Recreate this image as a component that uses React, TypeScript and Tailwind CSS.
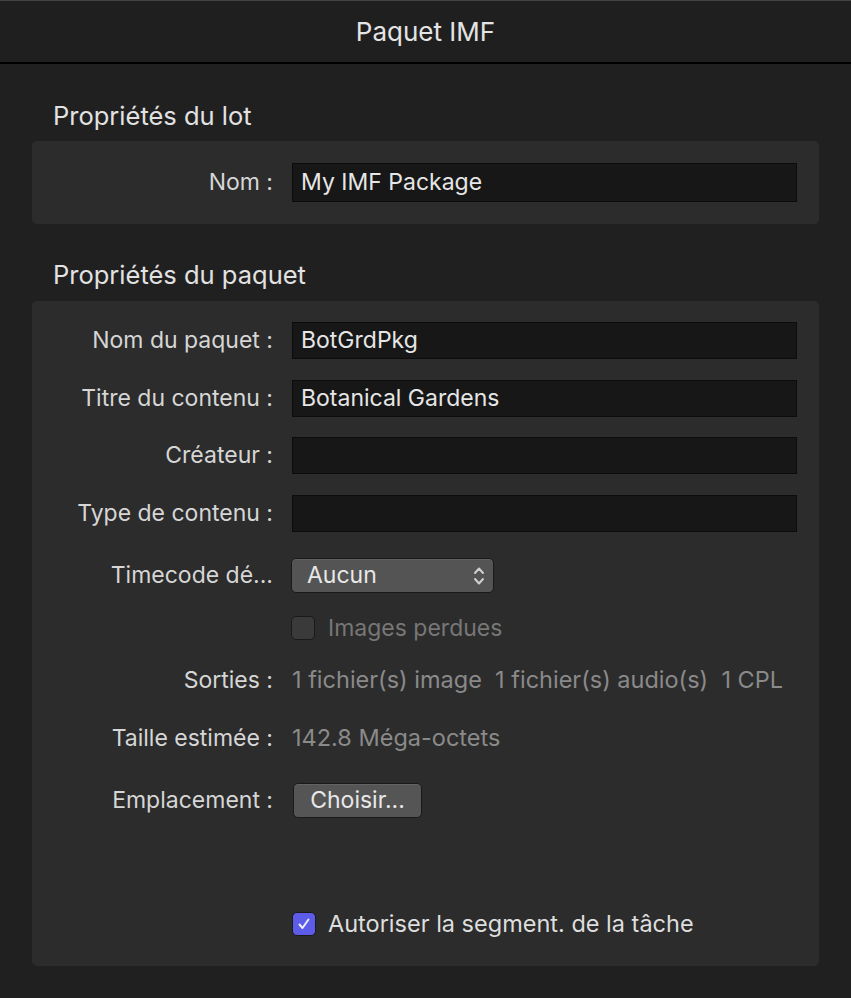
import React, { useState } from 'react';

const font = { fontFamily: 'Inter, "Noto Sans", sans-serif' };

const Label: React.FC<{ children: React.ReactNode }> = ({ children }) => (
  <div className="w-[242px] shrink-0 text-right text-[23px] text-[#d6d6d6] pr-[1px]">{children}</div>
);

const TextRow: React.FC<{ label: string; value: string; className?: string }> = ({ label, value, className }) => (
  <div className={`flex items-center h-[37px] ${className || ''}`}>
    <Label>{label}</Label>
    <div className="ml-[18px] flex-1 h-full bg-[#171717] border border-[#0c0c0c] flex items-center px-[8px] text-[23px] text-[#e6e6e6]">
      {value}
    </div>
  </div>
);

const ChevronUpDown = () => (
  <svg width="12" height="22" viewBox="0 0 12 22" fill="none" stroke="#cfcfcf" strokeWidth="2" strokeLinecap="round" strokeLinejoin="round">
    <path d="M2 8 L6 3.5 L10 8" />
    <path d="M2 14 L6 18.5 L10 14" />
  </svg>
);

export default function App() {
  const [split, setSplit] = useState(true);

  return (
    <div className="w-[851px] h-[998px] bg-[#202020] overflow-hidden" style={font}>
      {/* title bar */}
      <div className="h-[64px] bg-[#1f1f1f] border-t border-t-[#444] border-b-2 border-b-black flex items-center justify-center">
        <span className="text-[26px] text-[#e4e4e4]">Paquet IMF</span>
      </div>

      <div className="px-[32px] pt-[32px]">
        <div className="h-[40px] flex items-center pl-[21px] text-[25.5px] text-[#e2e2e2]">Propriétés du lot</div>
        <div className="mt-[5px] bg-[#2c2c2c] rounded-[5px] pt-[22px] pb-[22px] pr-[22px]">
          <div className="flex items-center h-[39px]">
            <Label>Nom :</Label>
            <div className="ml-[18px] flex-1 h-full bg-[#171717] border border-[#0c0c0c] flex items-center px-[8px] text-[23px] text-[#e6e6e6]">
              My IMF Package
            </div>
          </div>
        </div>

        <div className="mt-[31px] h-[40px] flex items-center pl-[21px] text-[25.5px] text-[#e2e2e2]">Propriétés du paquet</div>
        <div className="mt-[6px] bg-[#2c2c2c] rounded-[5px] pt-[21px] pb-[30px] pr-[22px]">
          <TextRow label="Nom du paquet :" value="BotGrdPkg" />
          <TextRow label="Titre du contenu :" value="Botanical Gardens" className="mt-[20.5px]" />
          <TextRow label="Créateur :" value="" className="mt-[20.5px]" />
          <TextRow label="Type de contenu :" value="" className="mt-[20.5px]" />

          <div className="flex items-center h-[35px] mt-[26.5px]">
            <Label>Timecode dé...</Label>
            <div className="ml-[17px] w-[203px] h-full rounded-[5px] bg-[#545454] border border-[#1a1a1a] shadow-[inset_0_1px_0_rgba(255,255,255,0.08)] flex items-center justify-between pl-[15px] pr-[8px] text-[23px] text-[#e8e8e8]">
              <span>Aucun</span>
              <ChevronUpDown />
            </div>
          </div>

          <div className="flex items-center h-[24px] mt-[23px]">
            <div className="w-[242px] shrink-0" />
            <div className="ml-[17px] w-[24px] h-[24px] rounded-[5px] bg-[#3a3a3a] border border-[#1a1a1a]" />
            <span className="ml-[13px] text-[23px] text-[#777]">Images perdues</span>
          </div>

          <div className="flex items-center h-[30px] mt-[25px]">
            <Label>Sorties :</Label>
            <span className="ml-[18px] text-[23.5px] text-[#8a8a8a] whitespace-pre">1 fichier(s) image  1 fichier(s) audio(s)  1 CPL</span>
          </div>

          <div className="flex items-center h-[30px] mt-[28px]">
            <Label>Taille estimée :</Label>
            <span className="ml-[18px] text-[23.5px] text-[#8a8a8a]">142.8 Méga-octets</span>
          </div>

          <div className="flex items-center h-[35px] mt-[30px]">
            <Label>Emplacement :</Label>
            <button className="ml-[19px] w-[129px] h-full rounded-[5px] bg-[#555] border border-[#1a1a1a] shadow-[inset_0_1px_0_rgba(255,255,255,0.08)] text-[23px] text-[#e8e8e8] flex items-center justify-center">
              Choisir...
            </button>
          </div>

          <div className="flex items-center h-[24px] mt-[94px]">
            <div className="w-[242px] shrink-0" />
            <button
              onClick={() => setSplit(!split)}
              className={`ml-[18px] w-[24px] h-[24px] rounded-[5px] border border-[#1a1a1a] flex items-center justify-center ${split ? 'bg-[#5c5ce8]' : 'bg-[#3a3a3a]'}`}
            >
              {split && (
                <svg width="16" height="16" viewBox="0 0 16 16" fill="none" stroke="#ececff" strokeWidth="2" strokeLinecap="round" strokeLinejoin="round">
                  <path d="M3.5 8.5 L6.5 12 L12.5 3.5" />
                </svg>
              )}
            </button>
            <span className="ml-[12px] text-[23.5px] text-[#dedede]">Autoriser la segment. de la tâche</span>
          </div>
        </div>
      </div>
    </div>
  );
}
